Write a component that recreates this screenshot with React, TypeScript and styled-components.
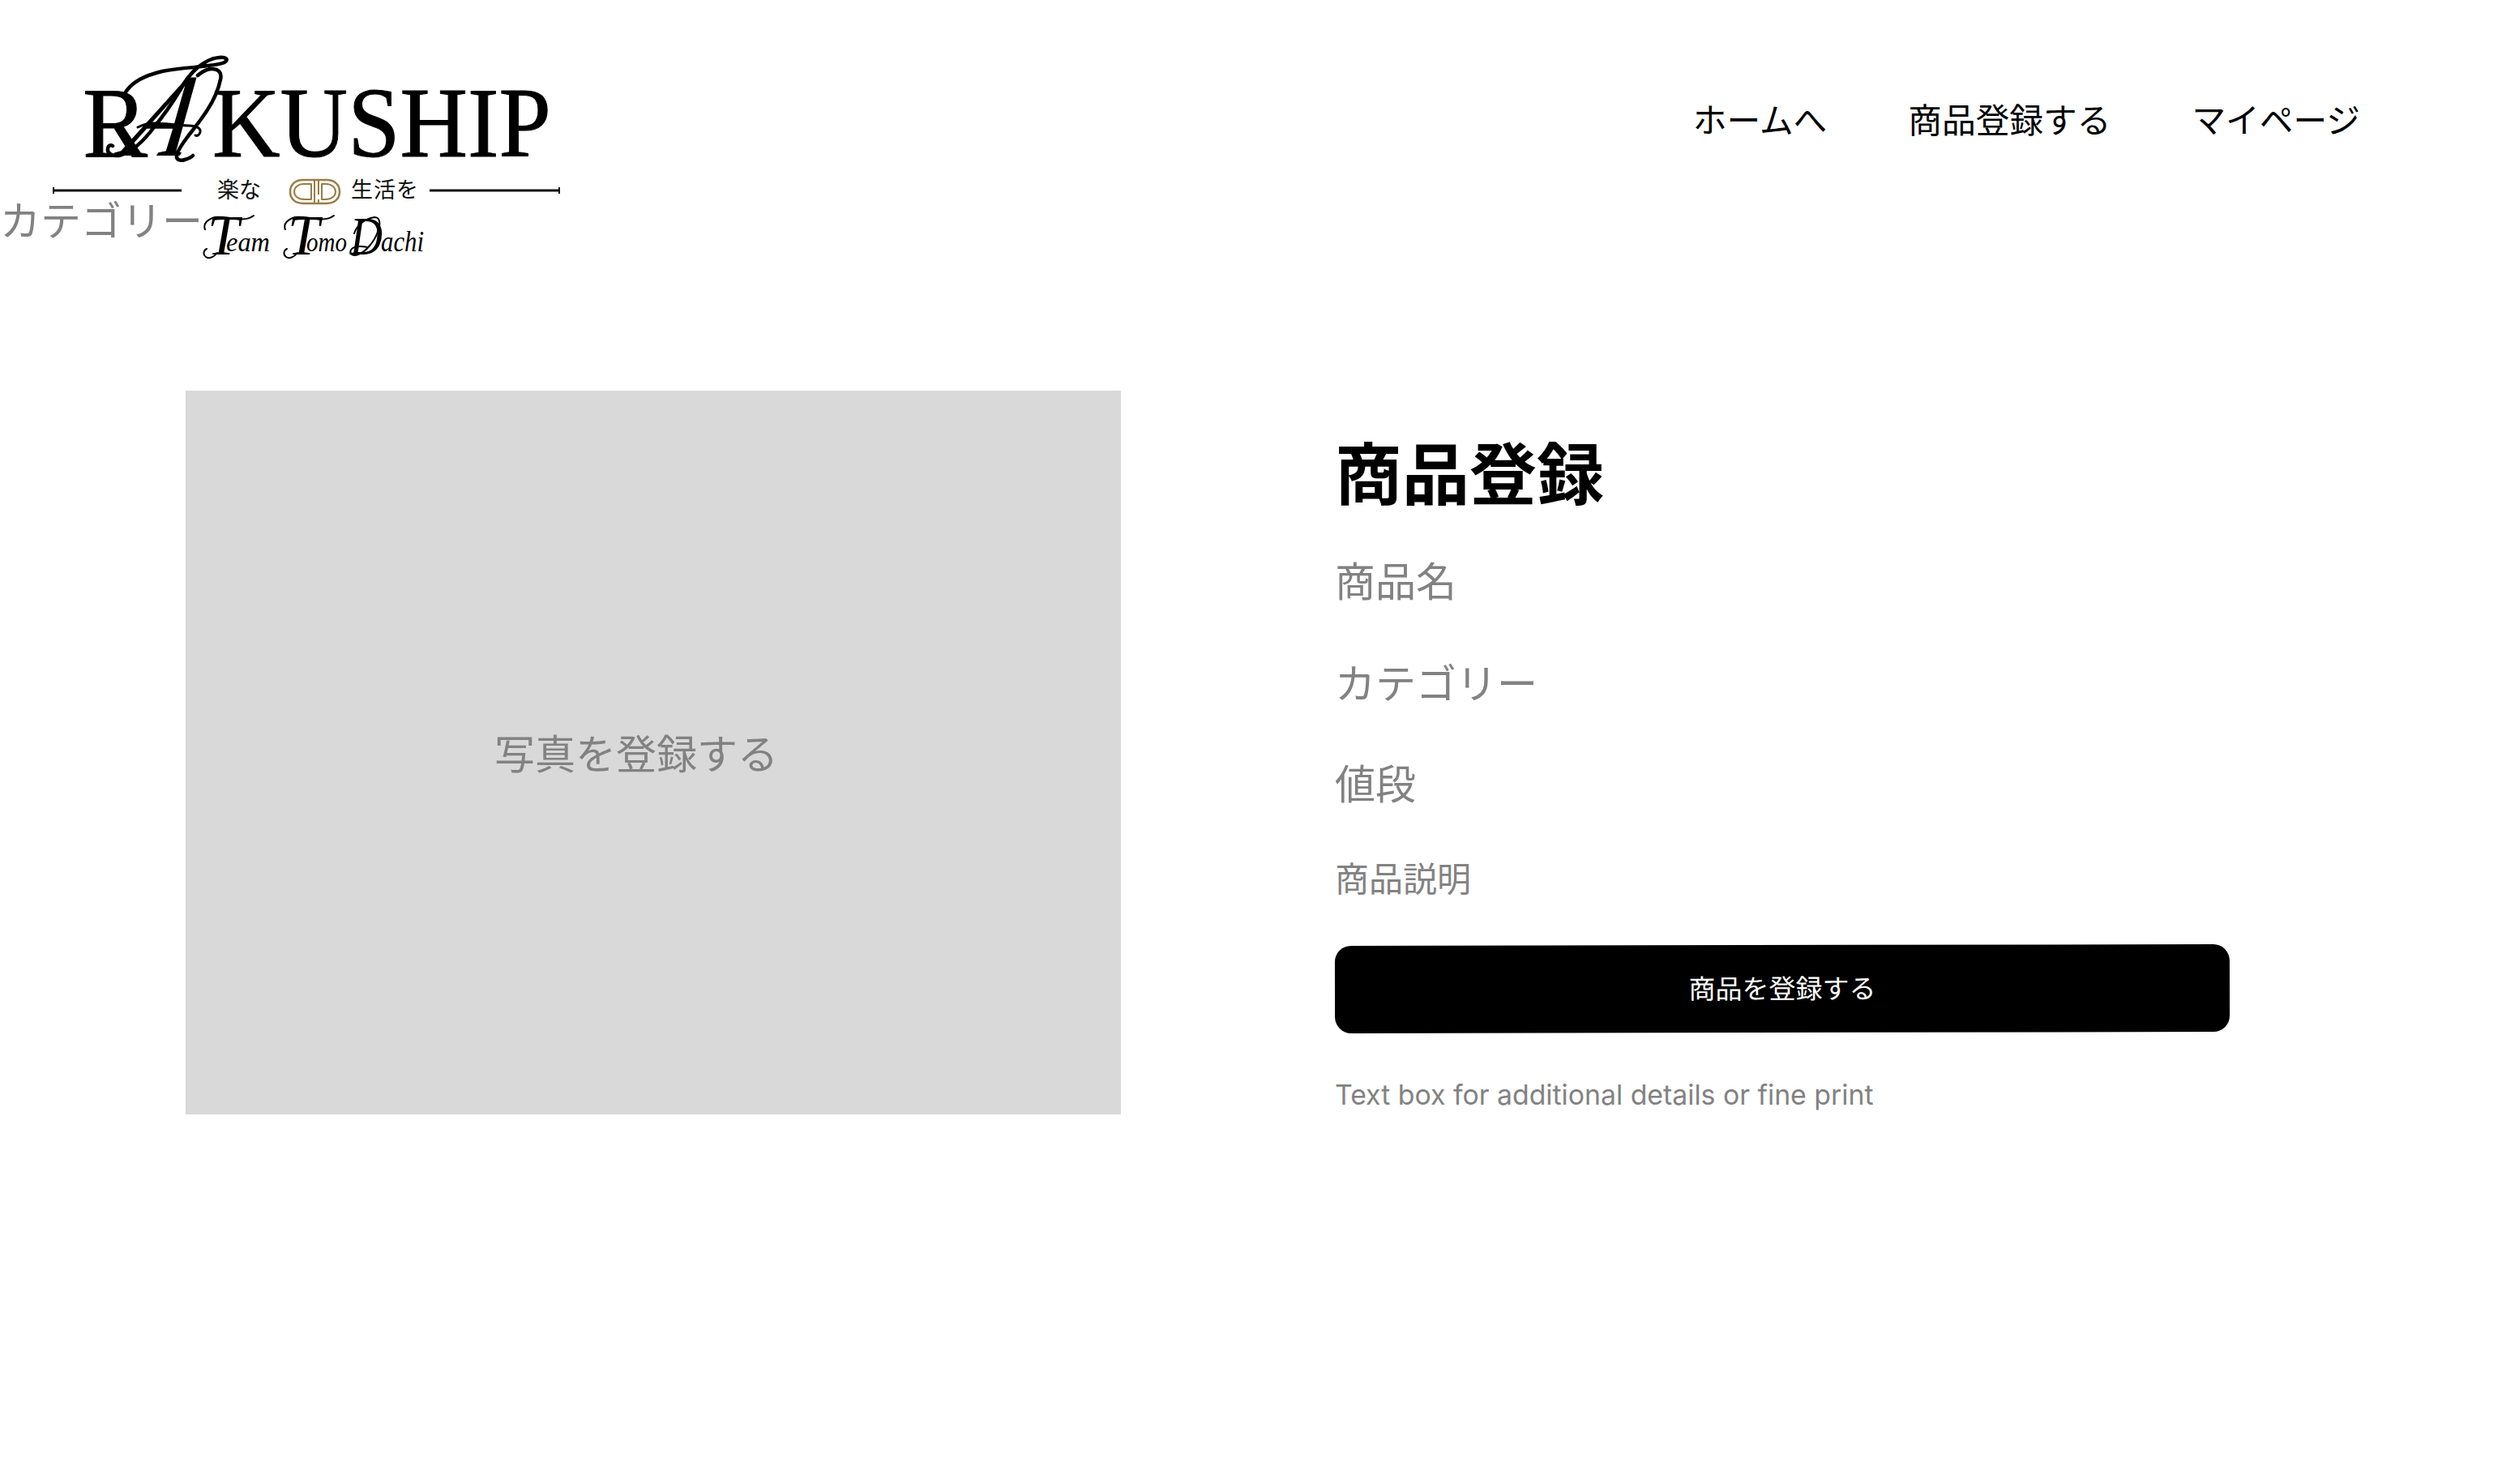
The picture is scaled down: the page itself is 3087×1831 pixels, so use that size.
import React from "react";
import styled, { createGlobalStyle } from "styled-components";

const Global = createGlobalStyle`
  html, body { margin: 0; padding: 0; background: #fff; }
  body { font-family: Inter, "Noto Sans CJK JP", sans-serif; }
`;

const Page = styled.div`
  position: relative;
  width: 3087px;
  min-height: 1831px;
  background: #fff;
  overflow: hidden;
`;

const Header = styled.header`
  display: flex;
  justify-content: space-between;
  align-items: flex-start;
  height: 330px;
  padding: 60px 175px 0 60px;
  box-sizing: border-box;
`;

const Nav = styled.nav`
  display: flex;
  gap: 100px;
  padding-top: 62px;
`;

const NavLink = styled.a`
  font-size: 41.7px;
  line-height: 54px;
  color: #000;
  text-decoration: none;
`;

const StrayLabel = styled.span`
  position: absolute;
  left: 0;
  top: 243px;
  font-size: 50px;
  line-height: 60px;
  color: #828282;
`;

const Main = styled.main`
  display: flex;
  align-items: flex-start;
  gap: 264px;
  margin-top: 152px;
  padding-left: 229px;
`;

const Photo = styled.div`
  display: flex;
  align-items: center;
  width: 1154px;
  height: 893px;
  padding: 4px 0 0 381px;
  box-sizing: border-box;
  background: #d9d9d9;
  font-size: 50px;
  line-height: 60px;
  color: #828282;
`;

const Form = styled.form`
  display: flex;
  flex-direction: column;
  width: 1104px;
  padding-top: 54px;
`;

const Title = styled.h1`
  margin: 0 0 52px;
  font-size: 83px;
  line-height: 100px;
  font-weight: 700;
  color: #000;
`;

const Field = styled.div<{ $size: number; $after: number }>`
  font-size: ${(p) => p.$size}px;
  line-height: ${(p) => p.$size + 10}px;
  margin-bottom: ${(p) => p.$after}px;
  color: #828282;
`;

const Submit = styled.button`
  display: block;
  width: 100%;
  height: 108px;
  border: 0;
  border-radius: 20px;
  background: #000;
  color: #fff;
  font: inherit;
  font-size: 33px;
  line-height: 40px;
  transform: rotate(-0.1deg);
`;

const FinePrint = styled.p`
  margin: 52px 0 0;
  font-size: 33.8px;
  line-height: 50px;
  color: #828282;
`;

const Logo = () => (
  <svg width="640" height="270" viewBox="60 60 640 270" role="img" aria-label="RAKUSHIP">
    <g fontFamily='"Liberation Serif", serif' fill="#000" stroke="#000" strokeWidth="1">
      <text x="102" y="193" fontSize="122" textLength="80" lengthAdjust="spacingAndGlyphs">R</text>
      <text x="262" y="193" fontSize="122" textLength="418" lengthAdjust="spacingAndGlyphs">KUSHIP</text>
    </g>
    <text transform="translate(146 192) skewX(-24)" fontFamily='"Liberation Serif", serif' fontSize="146" fontStyle="italic" textLength="76" lengthAdjust="spacingAndGlyphs" fill="#000">A</text>
    <g fill="none" stroke="#000" strokeLinecap="round" strokeLinejoin="round">
      <path d="M153 117C162 100 180 93 200 88C215 85 228 84 240 83C252 81 268 81 277 77C283 73 278 70 270 71C258 72 250 78 243 84C234 92 228 100 223 110C212 128 200 145 190 157C178 173 165 186 150 191C140 194 132 190 133 184C133 180 136 178 139 180" strokeWidth="4.500" />
      <path d="M244 93C250 88 256 85 261 85C270 85 274 90 272 98C270 108 265 122 255 137C248 148 240 158 232 168C226 176 220 184 218 191C217 197 222 199 228 197C232 196 236 194 238 192" strokeWidth="4.500" />
      <path d="M170 157C176 154 182 152 190 152C204 152 220 155 233 155C242 155 248 158 247 163C246 167 243 168 241 167" strokeWidth="3" />
    </g>
    <g stroke="#111" strokeWidth="3">
      <path d="M66 235H224M530 235H690" />
      <path d="M66 231V239M690 231V239" strokeWidth="2" />
    </g>
    <g fontFamily='"Noto Sans CJK JP", sans-serif' fontSize="27" fill="#111">
      <text x="268" y="244">楽な</text>
      <text x="433" y="244" textLength="83">生活を</text>
    </g>
    <g fill="none" stroke="#9a7d45" strokeLinejoin="round">
      <path d="M374 222H403C413 222 419 228 419 236.500C419 245 413 251 403 251H374C364 251 358 245 358 236.500C358 228 364 222 374 222Z" strokeWidth="2.500" />
      <path d="M384 227H375C368 227 363 231 363 236.500C363 242 368 246 375 246H384Z" strokeWidth="2" />
      <path d="M397 227H402C409 227 414 231 414 236.500C414 242 409 246 402 246H397Z" strokeWidth="2" />
      <path d="M388 222V251M393 222V240M393 246V251" strokeWidth="2" />
    </g>
    <g fontFamily='"Liberation Serif", serif' fontStyle="italic" fill="#000">
      <text x="256" y="314" fontSize="70">T</text>
      <text x="279" y="310" fontSize="34" textLength="54" lengthAdjust="spacingAndGlyphs">eam</text>
      <text x="355" y="314" fontSize="70">T</text>
      <text x="378" y="310" fontSize="34" textLength="50" lengthAdjust="spacingAndGlyphs">omo</text>
      <text x="432" y="314" fontSize="68" textLength="40" lengthAdjust="spacingAndGlyphs">D</text>
      <text x="470" y="310" fontSize="36" textLength="53" lengthAdjust="spacingAndGlyphs">achi</text>
    </g>
    <g fill="none" stroke="#000" strokeWidth="2" strokeLinecap="round">
      <path d="M253 283C250 276 256 271 265 268C272 267 283 269 292 270C300 271 308 270 313 266" />
      <path d="M268 312C264 317 258 320 254 317C250 314 251 309 255 307" />
      <path d="M352 283C349 276 355 271 364 268C371 267 382 269 391 270C399 271 407 270 412 266" />
      <path d="M367 312C363 317 357 320 353 317C349 314 350 309 354 307" />
      <path d="M437 288C440 278 450 270 462 268C469 268 470 276 466 286C462 298 452 310 442 314C434 317 430 312 434 307C440 302 448 304 453 305" />
    </g>
  </svg>
);

export default function App() {
  return (
    <Page>
      <Global />
      <Header>
        <Logo />
        <Nav>
          <NavLink>ホームへ</NavLink>
          <NavLink>商品登録する</NavLink>
          <NavLink>マイページ</NavLink>
        </Nav>
      </Header>
      <StrayLabel>カテゴリー</StrayLabel>
      <Main>
        <Photo>写真を登録する</Photo>
        <Form>
          <Title>商品登録</Title>
          <Field $size={50} $after={66}>商品名</Field>
          <Field $size={50} $after={64}>カテゴリー</Field>
          <Field $size={50} $after={61}>値段</Field>
          <Field $size={42} $after={55}>商品説明</Field>
          <Submit type="button">商品を登録する</Submit>
          <FinePrint>Text box for additional details or fine print</FinePrint>
        </Form>
      </Main>
    </Page>
  );
}
